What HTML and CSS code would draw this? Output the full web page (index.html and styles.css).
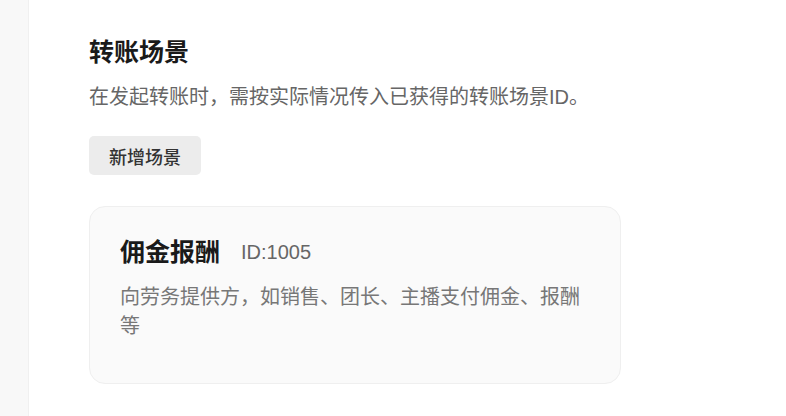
FILE: index.html
```html
<!DOCTYPE html>
<html lang="zh-CN">
<head>
    <meta charset="UTF-8">
    <title>转账场景</title>
    <link rel="stylesheet" href="styles.css">
</head>
<body>

    <div class="layout">
        <aside class="sidebar"></aside>

        <main class="content">
            <h2 class="page-title">转账场景</h2>
            <p class="page-desc">在发起转账时，需按实际情况传入已获得的转账场景ID。</p>

            <button class="btn-add" type="button">新增场景</button>

            <div class="scene-card">
                <div class="scene-head">
                    <span class="scene-name">佣金报酬</span>
                    <span class="scene-id">ID:1005</span>
                </div>
                <p class="scene-desc">向劳务提供方，如销售、团长、主播支付佣金、报酬等</p>
            </div>
        </main>
    </div>

</body>
</html>
```

FILE: styles.css
```css
body {
    margin: 0;
    font-family: "Liberation Sans", "Noto Sans CJK SC", sans-serif;
    background-color: #ffffff;
    color: #333;
}

.layout {
    display: flex;
    min-height: 416px;
}

.sidebar {
    width: 28px;
    flex-shrink: 0;
    background-color: #f8f8f8;
    border-right: 1px solid #f0f0f0;
}

.content {
    padding: 34px 0 0 60px;
    display: flex;
    flex-direction: column;
    align-items: flex-start;
}

.page-title {
    margin: 0;
    font-size: 25px;
    line-height: 36px;
    font-weight: 700;
    color: #1a1a1a;
}

.page-desc {
    margin: 12px 0 0;
    font-size: 20px;
    line-height: 30px;
    color: #666;
}

.btn-add {
    margin-top: 24px;
    height: 39px;
    padding: 0 20px;
    font-family: inherit;
    font-size: 18px;
    font-weight: 500;
    color: #333;
    background-color: #ececec;
    border: none;
    border-radius: 5px;
    cursor: pointer;
}

.scene-card {
    margin-top: 31px;
    width: 532px;
    box-sizing: border-box;
    padding: 30px 30px 42px;
    background-color: #fafafa;
    border: 1px solid #efefef;
    border-radius: 16px;
}

.scene-head {
    display: flex;
    align-items: center;
    gap: 21px;
    line-height: 30px;
}

.scene-name {
    font-size: 25px;
    font-weight: 700;
    color: #1a1a1a;
}

.scene-id {
    font-size: 20px;
    color: #666;
}

.scene-desc {
    margin: 16px 0 0;
    font-size: 20px;
    line-height: 29px;
    color: #777;
}
```
